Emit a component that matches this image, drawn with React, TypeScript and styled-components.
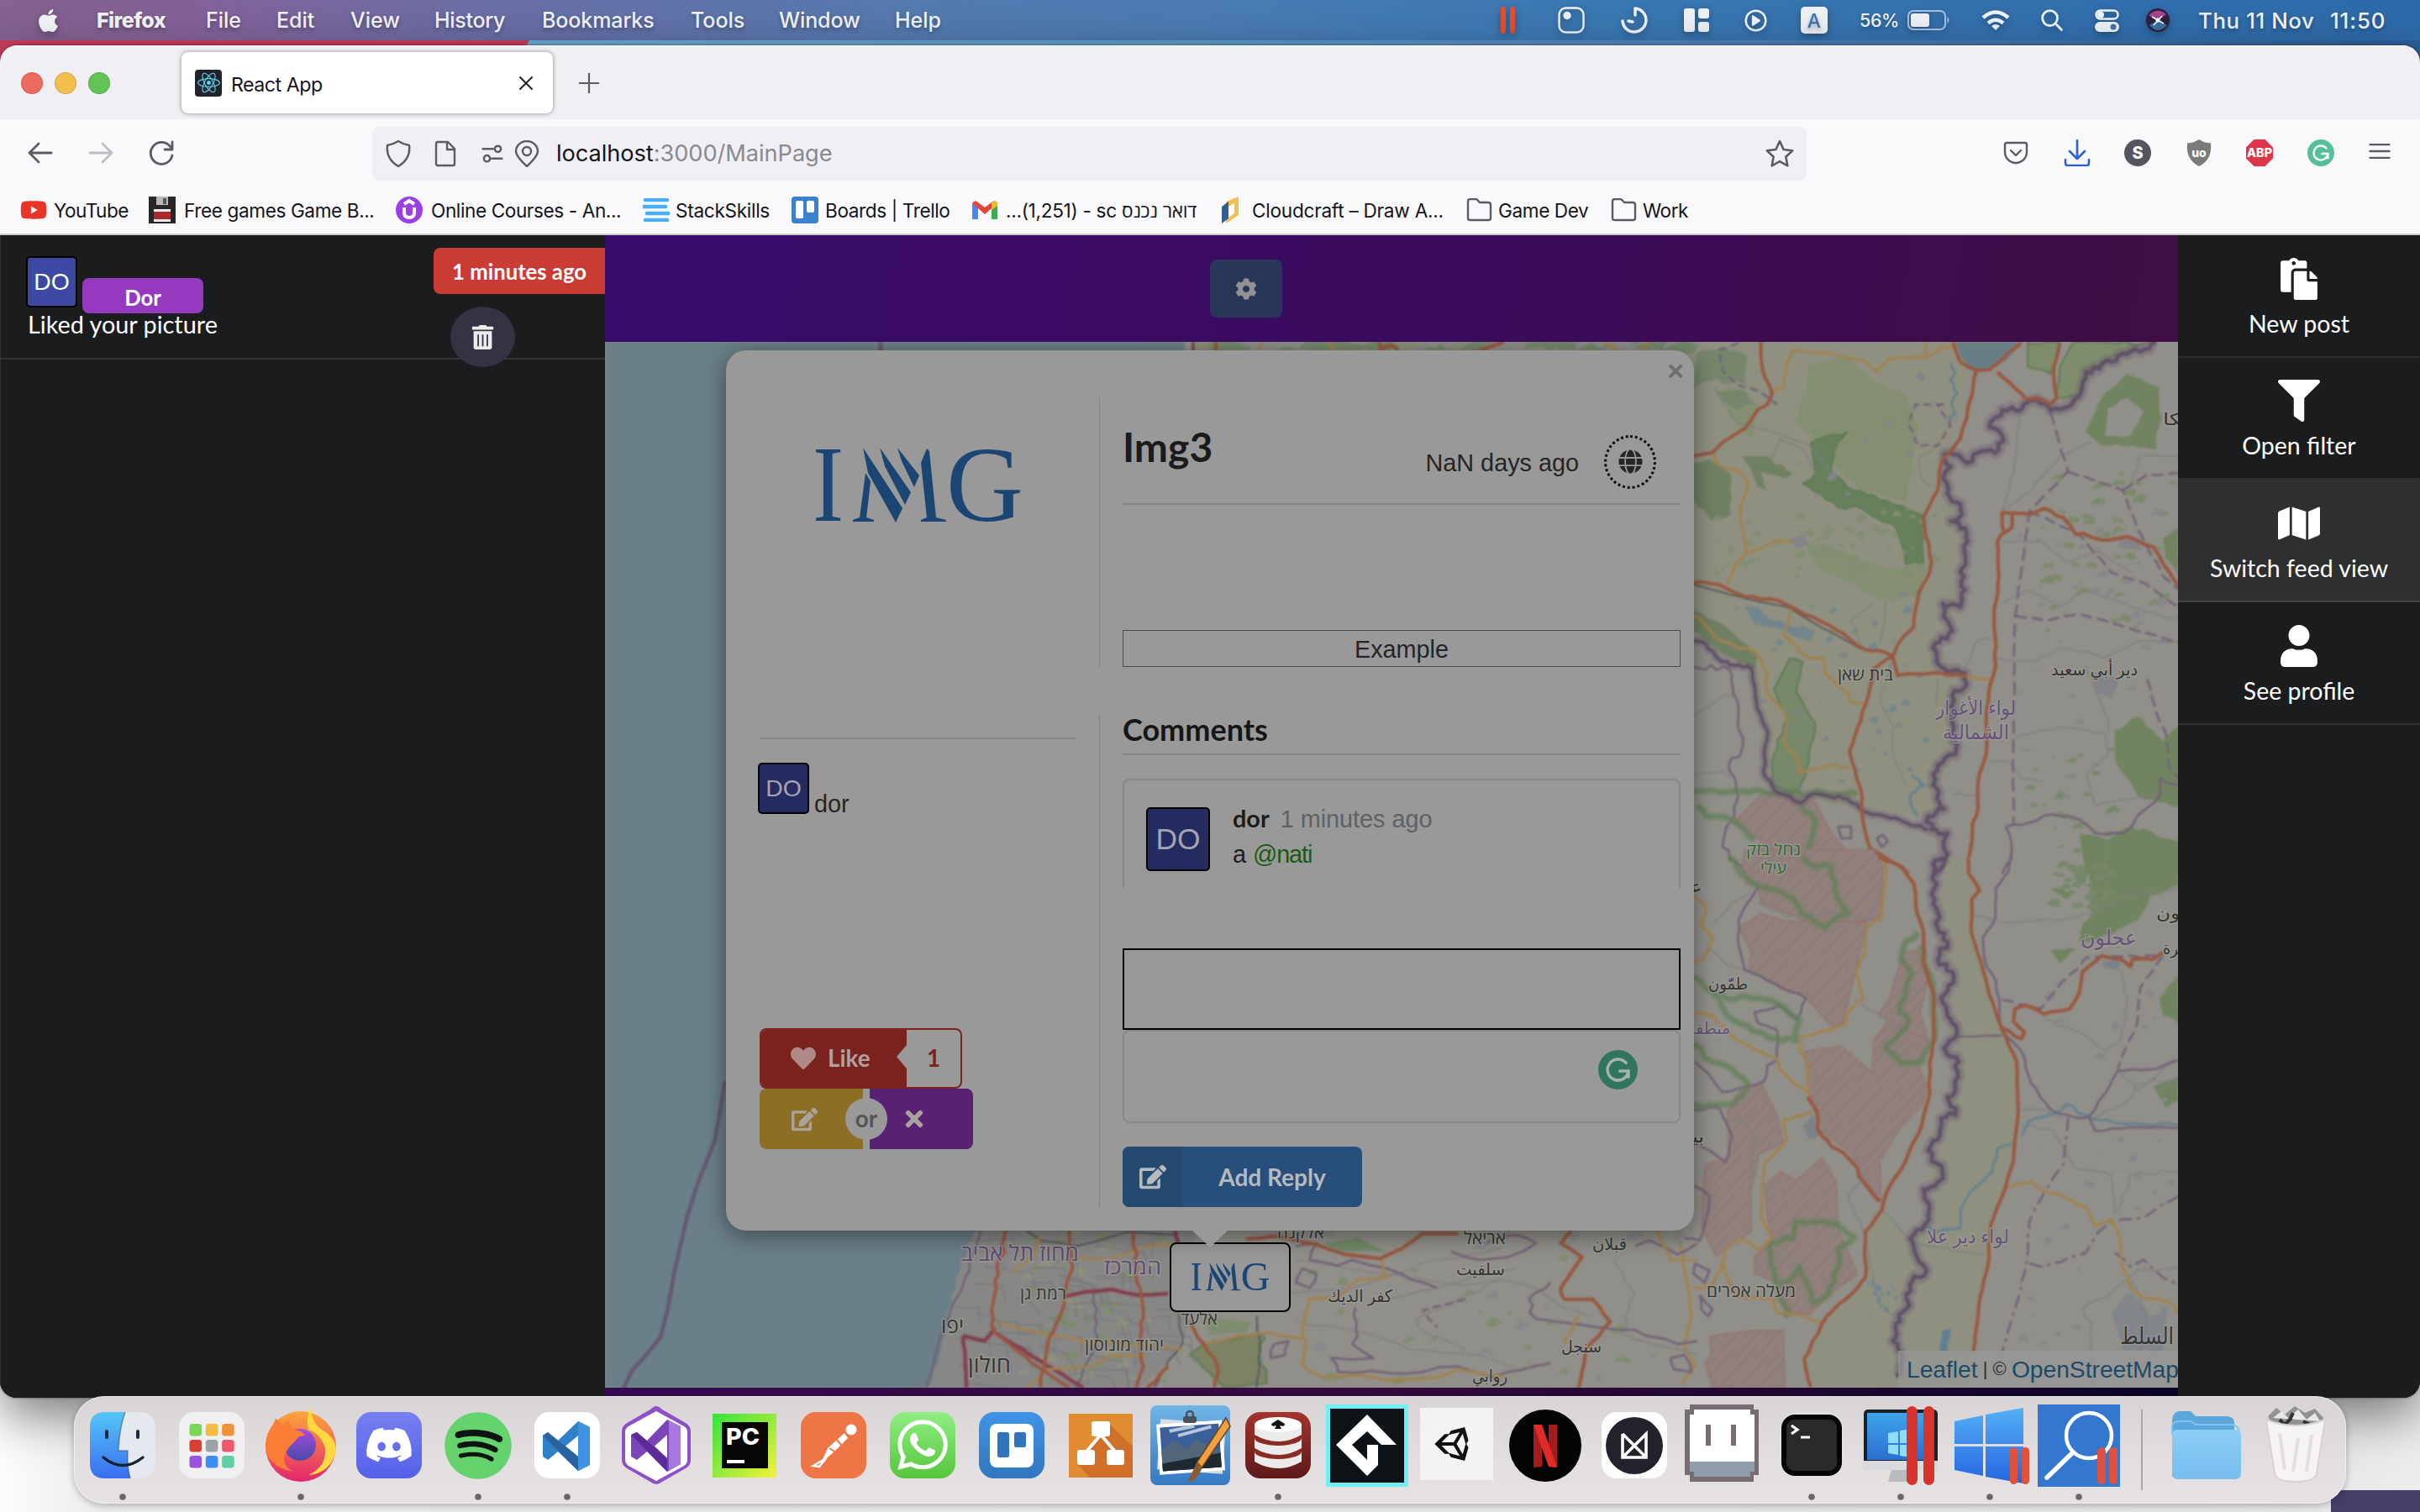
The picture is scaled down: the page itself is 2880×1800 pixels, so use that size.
import React from 'react';
import styled, { createGlobalStyle } from 'styled-components';
import {
  FaApple, FaReact, FaCog, FaPaste, FaFilter, FaMap, FaUser, FaTrashAlt, FaGlobe, FaHeart,
  FaEdit, FaTimes, FaDiscord, FaSpotify, FaWhatsapp, FaYoutube, FaUnity,
} from 'react-icons/fa';

const UI = `Inter, 'Open Sans', 'DejaVu Sans', sans-serif`;
const LATO = `Lato, 'Open Sans', sans-serif`;
const HELV = `'Liberation Sans', Arial, sans-serif`;

const Global = createGlobalStyle`
  * { box-sizing: border-box; }
  html, body { margin: 0; padding: 0; background: #ececec; }
  body { width: 2880px; height: 1800px; overflow: hidden; }
  svg { display: block; flex: none; }
`;

/* ---------- desktop ---------- */
const Desktop = styled.main`
  position: relative;
  width: 2880px;
  height: 1800px;
  overflow: hidden;
  font-family: ${UI};
  background: linear-gradient(90deg, #fdfdfd 0, #ececec 120px, #e4e4e4 2700px, #ededed 2880px);
`;
const Wallpaper = styled.div`
  height: 120px;
  background: linear-gradient(116deg, #cb3d5d 0 586px, #6caddb 588px, #5f9fcf 1300px, #3e78ad 2200px, #27609a 100%);
`;
const DesktopCorner = styled.div`
  position: absolute;
  right: 0;
  bottom: 0;
  width: 106px;
  height: 26px;
  background: #463d68;
`;

const MenuBar = styled.header`
  position: absolute;
  inset: 0 0 auto 0;
  height: 48px;
  display: flex;
  align-items: center;
  padding-left: 42px;
  color: #f3f4f8;
  font-size: 25px;
  background: linear-gradient(90deg, #85628f 0, #83629a 8%, #6a6ea5 20%, #547ab0 38%, #4a7cb3 50%, #3a78b3 66%, #2e6aab 100%);
  svg { filter: drop-shadow(0 3px 4px rgba(0, 0, 0, 0.3)); }
`;
const MenuItem = styled.span<{ $w: number; $bold?: boolean; $ls?: number; $size?: number }>`
  flex: none;
  width: ${(p) => p.$w}px;
  white-space: pre;
  font-size: ${(p) => p.$size ?? 25}px;
  font-weight: ${(p) => (p.$bold ? 800 : 500)};
  letter-spacing: ${(p) => p.$ls ?? 0}px;
  text-shadow: 0 3px 5px rgba(0, 0, 0, 0.3);
`;

/* ---------- browser window ---------- */
const Window = styled.section`
  position: absolute;
  left: 0;
  top: 54px;
  width: 2880px;
  height: 1610px;
  display: flex;
  flex-direction: column;
  overflow: hidden;
  border-radius: 20px;
  background: #1b1c1d;
`;
const WindowShadow = styled.div`
  position: absolute;
  left: 0;
  top: 54px;
  width: 2880px;
  height: 1610px;
  border-radius: 20px;
  box-shadow: 0 20px 60px rgba(0, 0, 0, 0.5), 0 0 3px rgba(0, 0, 0, 0.5);
`;
const TabStrip = styled.div`
  height: 88px;
  flex: none;
  display: flex;
  align-items: center;
  background: #f0f0f4;
  border-top: 1px solid #fff;
  padding: 0 0 0 25px;
`;
const Lights = styled.div`
  display: flex;
  gap: 14px;
  width: 191px;
`;
const Light = styled.i<{ $c: string }>`
  width: 26px;
  height: 26px;
  border-radius: 50%;
  background: ${(p) => p.$c};
  border: 1px solid rgba(0, 0, 0, 0.12);
`;
const Tab = styled.div`
  width: 442px;
  height: 73px;
  display: flex;
  align-items: center;
  padding: 0 24px 0 16px;
  border-radius: 8px;
  background: #fff;
  box-shadow: 0 0 5px rgba(60, 60, 70, 0.6);
  color: #15141a;
  font-size: 23.2px;
  margin-right: 31px;
`;
const Favicon = styled.span`
  width: 32px;
  height: 32px;
  display: grid;
  place-items: center;
  border-radius: 4px;
  background: #20232a;
  color: #5fd3f3;
  margin-right: 11px;
`;
const TabTitle = styled.span`
  flex: 1;
  padding-top: 4px;
  letter-spacing: -0.5px;
`;
const Toolbar = styled.div`
  height: 80px;
  flex: none;
  display: flex;
  align-items: center;
  padding: 0 34px 0 32px;
  background: #f9f9fb;
`;
const NavIcons = styled.div`
  display: flex;
  gap: 40px;
  width: 411px;
`;
const UrlBar = styled.div`
  width: 1707px;
  height: 64px;
  margin-top: 1px;
  display: flex;
  align-items: center;
  padding: 0 15px 0 15px;
  border-radius: 8px;
  background: #f0f0f4;
`;
const UrlIcons = styled.span`
  width: 204px;
  display: flex;
  align-items: center;
`;
const UrlIcon = styled.span<{ $w: number }>`
  width: ${(p) => p.$w}px;
`;
const UrlText = styled.span`
  flex: 1;
  color: #8a898f;
  font-size: 27.2px;
  letter-spacing: -0.05px;
  b { font-weight: 400; color: #15141a; }
`;
const Extensions = styled.div`
  flex: 1;
  display: flex;
  justify-content: space-between;
  padding-left: 233px;
`;
const Bookmarks = styled.nav`
  height: 58px;
  flex: none;
  display: flex;
  align-items: center;
  padding-left: 24px;
  background: #f9f9fb;
  border-bottom: 2px solid #ccccce;
  color: #15141a;
  font-size: 22.6px;
`;
const Bookmark = styled.span<{ $w: number; $gap: number; $ls: number }>`
  flex: none;
  width: ${(p) => p.$w}px;
  display: flex;
  align-items: center;
  gap: ${(p) => p.$gap}px;
  white-space: nowrap;
  letter-spacing: ${(p) => p.$ls}px;
`;

/* ---------- application ---------- */
const Page = styled.div`
  flex: 1;
  display: flex;
  min-height: 0;
`;
const Feed = styled.aside`
  width: 720px;
  background: #1b1c1d;
  border-left: 1px solid #303132;
`;
const Notice = styled.article`
  height: 148px;
  display: flex;
  justify-content: space-between;
  padding: 15px 0 0 30px;
  border-bottom: 2px solid #323334;
  color: #fff;
  font: 400 28px/30px ${LATO};
`;
const NoticeWho = styled.div`
  display: flex;
  align-items: flex-end;
  gap: 6px;
  height: 78px;
  > :first-child { margin-bottom: 7px; }
`;
const NoticeText = styled.p`
  margin: -2px 0 0 2px;
  font-size: 28.8px;
  white-space: nowrap;
`;
const Avatar = styled.span<{ $s: number; $dim?: boolean }>`
  width: ${(p) => p.$s}px;
  height: ${(p) => p.$s}px;
  flex: none;
  display: grid;
  place-items: center;
  border: 2px solid #000;
  border-radius: 5px;
  background: ${(p) => (p.$dim ? '#242b61' : '#3d48a2')};
  color: ${(p) => (p.$dim ? '#a3a4b4' : '#fff')};
  font: 400 ${(p) => p.$s * 0.465}px/1 ${HELV};
`;
const NameTag = styled.span`
  width: 144px;
  height: 42px;
  border-radius: 8px;
  background: #953abf;
  display: grid;
  place-items: center;
  padding-top: 4px;
  font-weight: 700;
  font-size: 25.7px;
`;
const NoticeSide = styled.div`
  width: 204px;
  display: flex;
  flex-direction: column;
  gap: 15px;
`;
const TimeTag = styled.span`
  flex: none;
  height: 55px;
  border-radius: 8px 0 0 8px;
  background: #c93b33;
  display: grid;
  place-items: center;
  font-weight: 700;
  font-size: 25.7px;
`;
const RoundButton = styled.button`
  flex: none;
  width: 77px;
  height: 72px;
  margin-left: 20px;
  border: 0;
  border-radius: 50%;
  background: #353343;
  color: #ececec;
  display: grid;
  place-items: center;
`;
const Center = styled.div`
  width: 1872px;
  flex: none;
  display: flex;
  flex-direction: column;
`;
const TopBar = styled.div`
  height: 127px;
  flex: none;
  display: flex;
  align-items: center;
  padding-left: 720px;
  background: linear-gradient(100deg, #380b6d, #3a0b5c 55%, #3f0e44);
`;
const SettingsButton = styled.button`
  width: 86px;
  height: 69px;
  border: 0;
  border-radius: 8px;
  display: grid;
  place-items: center;
  background: #283759;
  color: #929294;
`;
const MapArea = styled.div`
  position: relative;
  flex: none;
  height: 1245px;
  overflow: hidden;
  background: #918f8a;
`;
const BottomBar = styled.div`
  flex: 1;
  background: linear-gradient(90deg, #340b52, #360b3e 45%, #0c0528);
`;
const Attribution = styled.div`
  position: absolute;
  right: 0;
  bottom: 0;
  width: 333px;
  height: 44px;
  padding-left: 10px;
  display: flex;
  align-items: center;
  white-space: pre;
  overflow: hidden;
  background: rgba(153, 153, 153, 0.72);
  color: #2c2c2c;
  font: 400 22px/46px ${HELV};
  a { color: #1c4a66; font-size: 28.2px; }
`;

/* popup */
const Popup = styled.section`
  position: absolute;
  left: 144px;
  top: 10px;
  width: 1152px;
  height: 1048px;
  padding: 56px 16px 28px 40px;
  display: grid;
  grid-template-columns: 376px 1px 664px;
  grid-template-rows: 321px 587px;
  column-gap: 27.5px;
  row-gap: 56px;
  border-radius: 24px;
  background: #999;
  box-shadow: 0 6px 28px rgba(0, 0, 0, 0.42);
  color: #252526;
  font: 400 28.8px/1.2 ${HELV};
`;
const PopupTip = styled.i`
  position: absolute;
  left: 554px;
  top: 1047px;
  border: 22px solid transparent;
  border-top: 21px solid #999;
  border-bottom: 0;
`;
const CloseX = styled.span`
  position: absolute;
  right: 12px;
  top: 8px;
  font: 700 34px/32px ${HELV};
  color: #6e6e6e;
`;
const VLine = styled.i`
  background: #838383;
`;
const LogoCell = styled.div`
  padding: 60px 0 0 67px;
`;
const Details = styled.div`
  display: flex;
  flex-direction: column;
  justify-content: space-between;
`;
const TitleRow = styled.div`
  height: 128px;
  display: flex;
  align-items: center;
  border-bottom: 2px solid #858585;
  padding-right: 29px;
`;
const Title = styled.h1`
  flex: 1;
  margin: 0;
  padding: 0 0 9px 0;
  font: 700 48px/1 ${LATO};
  color: #1b1b1b;
`;
const Ago = styled.span`
  margin: 31px 30px 0 0;
`;
const DottedRing = styled.span`
  width: 62px;
  height: 64px;
  margin-top: 27px;
  display: grid;
  place-items: center;
  border: 3px dotted #080808;
  border-radius: 50%;
  color: #262626;
`;
const Caption = styled.div`
  height: 44px;
  display: grid;
  place-items: center;
  padding-top: 3px;
  border: 1.5px solid #4c4c4c;
`;
const AuthorCol = styled.div`
  display: flex;
  flex-direction: column;
  padding-top: 28px;
`;
const Rule = styled.i`
  height: 2px;
  flex: none;
  background: #858585;
`;
const Author = styled.div`
  display: flex;
  align-items: flex-end;
  gap: 6px;
  margin: 28px 0 255px -2px;
  line-height: 24px;
`;
const LikeButton = styled.div`
  display: flex;
  width: 241px;
  height: 72px;
  flex: none;
  border: 2px solid #7a221e;
  border-radius: 8px;
  background: #999;
  font: 700 27.8px/1 ${LATO};
`;
const LikeMain = styled.div`
  position: relative;
  width: 173px;
  display: flex;
  align-items: center;
  gap: 14px;
  padding-left: 35px;
  border-radius: 6px 0 0 6px;
  background: #7a221e;
  color: #b3a0a0;
  svg { color: #b08a88; }
  &::after {
    content: '';
    position: absolute;
    right: 0;
    top: 18px;
    border: 14px solid transparent;
    border-left: 0;
    border-right: 12px solid #999;
  }
`;
const LikeCount = styled.div`
  flex: 1;
  display: grid;
  place-items: center;
  color: #7a221e;
`;
const OrGroup = styled.div`
  position: relative;
  display: flex;
  width: 254px;
  height: 72px;
  justify-content: space-between;
`;
const OrHalf = styled.div<{ $c: string; $right?: boolean }>`
  width: 123px;
  display: grid;
  place-items: center;
  padding-right: 17px;
  border-radius: ${(p) => (p.$right ? '0 8px 8px 0' : '8px 0 0 8px')};
  background: ${(p) => p.$c};
  color: #aaa39d;
`;
const OrBadge = styled.span`
  position: absolute;
  left: 102px;
  top: 11px;
  width: 50px;
  height: 50px;
  border-radius: 50%;
  display: grid;
  place-items: center;
  background: #999;
  color: #555;
  font: 700 27.8px/1 ${LATO};
`;
const CommentCol = styled.div`
  display: flex;
  flex-direction: column;
`;
const SectionTitle = styled.h3`
  height: 49px;
  margin: 0 0 28px;
  border-bottom: 2px solid #858585;
  color: #161616;
  font: 700 36px/37px ${LATO};
`;
const CommentBox = styled.div`
  height: 130px;
  display: flex;
  gap: 27px;
  padding: 32px 0 0 26px;
  border: 2px solid #888;
  border-bottom: 0;
  border-radius: 8px 8px 0 0;
`;
const CommentText = styled.div`
  color: #1c1c1c;
  line-height: 42px;
  margin-top: -8px;
  b { font: 700 28.8px/42px ${LATO}; margin-right: 13px; }
  time { color: #616161; }
  em { font-style: normal; color: #1c5a12; letter-spacing: -1.1px; }
`;
const ReplyInput = styled.div`
  height: 97px;
  margin-top: 72px;
  border: 2px solid #000;
`;
const ReplyArea = styled.div`
  height: 111px;
  display: flex;
  justify-content: flex-end;
  padding: 22px 49px 0 0;
  border: 2px solid #888;
  border-radius: 8px;
`;
const AddReply = styled.button`
  width: 285px;
  height: 72px;
  margin-top: 28px;
  padding: 0;
  display: flex;
  overflow: hidden;
  border: 0;
  border-radius: 8px;
  background: #284e7b;
  color: #b5babf;
  font: 700 28px/72px ${LATO};
  text-align: center;
`;
const AddIcon = styled.span`
  width: 71px;
  height: 72px;
  display: grid;
  place-items: center;
  background: #254a70;
`;
const AddLabel = styled.span`
  flex: 1;
`;
const Marker = styled.div`
  position: absolute;
  left: 672px;
  top: 1072px;
  width: 144px;
  height: 83px;
  display: grid;
  place-items: center;
  border: 2px solid #000;
  border-radius: 8px;
  background: #989898;
`;

/* right menu */
const Side = styled.aside`
  width: 288px;
  background: #1b1c1d;
`;
const SideItem = styled.div<{ $on?: boolean }>`
  height: 145.7px;
  display: flex;
  flex-direction: column;
  align-items: center;
  justify-content: flex-end;
  padding-bottom: 22px;
  gap: 11px;
  border-bottom: 2px solid ${(p) => (p.$on ? '#434445' : '#2e2f30')};
  background: ${(p) => (p.$on ? '#2e2f30' : '#1b1c1d')};
  color: #fff;
  font: 400 28.5px/34px ${LATO};
`;

/* dock */
const Dock = styled.footer`
  position: absolute;
  left: 88px;
  top: 1662px;
  width: 2704px;
  height: 128px;
  display: flex;
  padding-left: 5px;
  border-radius: 36px;
  background: linear-gradient(180deg, #d8d4d6, #e3dee0 60%, #e6e2e4);
  box-shadow: inset 0 0 0 1px rgba(255, 255, 255, 0.45), 0 2px 8px rgba(0, 0, 0, 0.28);
`;
const DockSlot = styled.div`
  width: 105.8px;
  height: 128px;
  flex: none;
  svg { overflow: visible; }
`;
const DockLine = styled.i`
  width: 2px;
  height: 96px;
  margin: 16px 23px 0 22px;
  background: #aaa6a8;
`;

/* ---------- map ---------- */
type Pt = [number, number];
const pts = (s: string): Pt[] => s.trim().split(/\s+/).map((p) => p.split(',').map(Number) as Pt);
const line = (s: string) => 'M' + s.trim().split(/\s+/).join('L');
const wiggle = (s: string, amp: number, step: number, seed = 1) => {
  const p = pts(s);
  let out = `M${p[0][0]},${p[0][1]}`;
  let k = seed * 17;
  for (let i = 1; i < p.length; i++) {
    const [ax, ay] = p[i - 1];
    const [bx, by] = p[i];
    const len = Math.hypot(bx - ax, by - ay) || 1;
    const n = Math.max(1, Math.round(len / step));
    for (let j = 1; j <= n; j++) {
      k = (k * 73 + 41) % 997;
      const side = j === n ? 0 : (k / 997 - 0.5) * 2 * amp;
      const t = j / n;
      out += `L${(ax + (bx - ax) * t - ((by - ay) / len) * side).toFixed(1)},${(ay + (by - ay) * t + ((bx - ax) / len) * side).toFixed(1)}`;
    }
  }
  return out;
};

const ROAD: Record<string, [string, number]> = {
  red: ['#98583f', 4.2],
  orange: ['#a0824e', 3.2],
  gray: ['#7f7f82', 1.5],
  purple: ['#716177', 2.6],
  maroon: ['#844050', 5],
  blue: ['#64818f', 3],
  black: ['#55555a', 2],
};
const Road = ({ k, d, a = 3, s = 26, dash }: { k: string; d: string; a?: number; s?: number; dash?: string }) => (
  <path d={wiggle(d, a, s, d.length)} fill="none" stroke={ROAD[k][0]} strokeWidth={ROAD[k][1]} strokeLinejoin="round" vectorEffect="non-scaling-stroke" strokeDasharray={dash} />
);
const Area = ({ c, d, a = 6, s = 22, st }: { c: string; d: string; a?: number; s?: number; st?: string }) => (
  <path d={wiggle(d, a, s, d.length) + 'Z'} fill={c} stroke={st} strokeWidth={st ? 2 : 0} vectorEffect="non-scaling-stroke" />
);
const Border = ({ d, a = 10, s = 14, w = 5 }: { d: string; a?: number; s?: number; w?: number }) => {
  const path = wiggle(d, a, s, d.length);
  return (
    <g fill="none" strokeLinejoin="round">
      <path d={path} stroke="#6c5c74" strokeWidth={w * 2.2} opacity={0.35} vectorEffect="non-scaling-stroke" />
      <path d={path} stroke="#5c4c64" strokeWidth={w * 0.8} opacity={0.85} vectorEffect="non-scaling-stroke" />
    </g>
  );
};
const Reserve = ({ d }: { d: string }) => {
  const path = wiggle(d, 7, 24, d.length);
  return (
    <g fill="none" strokeLinejoin="round">
      <path d={path} stroke="#65825a" strokeWidth="9" opacity={0.5} vectorEffect="non-scaling-stroke" />
      <path d={path} stroke="#587a50" strokeWidth="2.5" opacity={0.55} vectorEffect="non-scaling-stroke" />
    </g>
  );
};
const Military = ({ d }: { d: string }) => <path d={d} fill="url(#hatch)" stroke="#94706c" strokeWidth="3" />;
const Label = ({ x, y, w, c = '#363634', size = 20, children }: { x: number; y: number; w: number; c?: string; size?: number; children: string }) => (
  <text x={x + w / 2 - 720} y={y - 407} textLength={w} lengthAdjust="spacingAndGlyphs" textAnchor="middle" fontSize={size} fontWeight="500" fill={c} stroke="#a09f9a" strokeWidth="3" strokeOpacity="0.65" paintOrder="stroke" fontFamily="'Open Sans', 'DejaVu Sans', sans-serif">{children}</text>
);

const scatter = (n: number, seed: number, x0: number, y0: number, w: number, h: number) => {
  let k = seed;
  const rnd = () => ((k = (k * 1103515245 + 12345) % 2147483648), k / 2147483648);
  return Array.from({ length: n }, () => ({ x: x0 + rnd() * w, y: y0 + rnd() * h, r: 3 + rnd() * 9, q: rnd() }));
};
const blob = (b: { x: number; y: number; r: number; q: number }, sx: number) =>
  wiggle(`${b.x},${b.y - b.r} ${b.x + b.r * sx},${b.y - b.r * 0.3} ${b.x + b.r * sx * 0.7},${b.y + b.r} ${b.x - b.r * sx},${b.y + b.r * 0.6}`, b.r * 0.5, 8, Math.floor(b.q * 40) + 1) + 'Z';

const MapPicture = () => (
  <svg width="1872" height="1245" viewBox="0 0 1872 1245">
    <defs>
      <pattern id="hatch" width="22" height="22" patternUnits="userSpaceOnUse" patternTransform="rotate(45)">
        <rect width="22" height="22" fill="#8f817d" />
        <rect width="3.500" height="22" fill="#93736f" />
      </pattern>
      <filter id="soft"><feGaussianBlur stdDeviation="0.8" /></filter>
    </defs>
    <rect width="1872" height="1245" fill="#918f89" />
    <g filter="url(#soft)">
      {/* eastern tile, north half */}
      <g transform="translate(1280 -7) scale(0.3827 0.4082)">
        <Area c="#8f907f" d="-40,0 860,0 900,100 830,340 880,560 870,800 790,910 890,990 850,1200 780,1400 560,1380 370,1350 280,1320 240,1120 200,960 40,890 -40,880" a={4} />
        <Area c="#848f72" d="400,80 520,60 600,130 700,170 740,260 720,400 700,480 560,450 480,380 420,300 360,250 390,160" />
        <Area c="#848f72" d="380,600 480,620 640,680 760,660 750,760 620,770 540,720 430,680" />
        <Area c="#848f72" d="140,130 240,200 220,300 150,230" />
        <Area c="#77866a" d="50,50 130,30 210,60 200,140 90,130 40,150" />
        <Area c="#77866a" d="110,160 190,155 230,200 180,215 130,190" />
        <Area c="#6f8062" d="40,370 90,360 155,400 155,520 100,540 40,480" />
        <Area c="#6f8062" d="190,350 260,350 350,400 330,415 250,395 270,450 240,440 220,390" />
        <Area c="#6f8062" d="40,800 130,840 240,930 230,970 120,920 40,860" a={3} />
        <Area c="#66805c" d="405,310 520,280 480,330 470,400 540,450 640,480 750,520 755,660 700,665 670,560 560,500 490,500 380,430 420,400" st="#5b7a50" />
        <Area c="#78886a" d="340,940 380,950 360,1040 420,1130 400,1240 370,1330 280,1310 290,1220 330,1120 290,1030" st="#5b7a50" />
        <Area c="#7f8d6d" d="1080,20 1180,20 1150,110 1080,90" st="#5b7a50" />
        <Area c="#7f8d6d" d="1220,20 1450,20 1330,70 1260,100 1240,170 1170,180 1180,90" st="#5b7a50" />
        <Area c="#71835f" d="1260,280 1310,180 1390,110 1490,150 1490,260 1480,330 1400,320 1310,320" />
        <Area c="#918f89" d="1330,210 1390,180 1440,220 1400,290 1320,290" />
        <Area c="#71835f" d="1350,1150 1420,1110 1500,1180 1568,1120 1568,1380 1420,1340 1350,1230" />
        <Area c="#71835f" d="1240,1450 1330,1470 1400,1430 1568,1480 1568,1568 1260,1568" />
        <Area c="#71835f" d="1500,590 1548,560 1548,700 1510,650" />
        {scatter(46, 7, 1110, 400, 420, 460).map((b, i) => <path key={i} d={blob(b, 2.2)} fill="#7c8a6b" />)}
        {scatter(60, 11, 100, 500, 700, 200).map((b, i) => <path key={i} d={blob(b, 1.5)} fill="#818d70" />)}
        {scatter(26, 29, 1060, 1180, 300, 360).map((b, i) => <path key={i} d={blob(b, 2.4)} fill="#77876a" />)}
        {scatter(36, 3, 1050, 500, 480, 900).map((b, i) => <path key={i} d={blob(b, 1.8)} fill="#86868a" />)}
        {scatter(30, 5, 60, 100, 720, 1200).map((b, i) => <path key={i} d={blob(b, 1.6)} fill="#838388" />)}
        {scatter(26, 19, 200, 780, 600, 560).map((b, i) => <path key={i} d={blob(b, 1.4)} fill="#71868d" />)}
        <Area c="#838388" d="340,590 380,580 400,605 360,620" /><Area c="#838388" d="1280,980 1360,1000 1340,1060 1290,1040" />
        <Area c="#838388" d="1360,590 1430,590 1430,625 1380,620" /><Area c="#71868d" d="200,790 240,790 290,830 420,860 400,890 290,850 230,840" />
        <path d="M858,17Q870,90 930,98Q1020,90 1055,17Z" fill="#687e86" />
        <Military d="M165,1420L260,1330L410,1345L470,1450L530,1520L620,1568L630,1600L200,1600L250,1470Z" />
        <Road k="gray" d="105,150 160,240 210,260 320,290 400,320 470,400" /><Road k="gray" d="800,320 740,360 750,420 790,440" />
        <Road k="gray" d="1055,220 1035,400 1000,510 1090,450 1180,350 1280,310" /><Road k="gray" d="1000,780 1080,740 1180,790 1260,740 1400,790 1548,830" />
        <Road k="gray" d="1000,600 1120,600 1200,660 1300,630 1400,690" /><Road k="gray" d="985,940 1100,950 1180,910 1260,920 1320,940 1420,890 1548,890" />
        <Road k="gray" d="880,980 920,890 970,880" /><Road k="gray" d="660,940 620,1060 660,1140 660,1220 700,1310" /><Road k="gray" d="800,1000 795,1080" />
        <Road k="gray" d="1040,1170 1180,1140 1320,1160 1330,1220 1260,1280 1290,1370 1400,1350 1480,1330" /><Road k="gray" d="1260,960 1330,1120 1330,1160" />
        <Road k="gray" d="845,1335 920,1340" /><Road k="gray" d="960,1240 1020,1240 1060,1290 1130,1300" /><Road k="gray" d="40,1110 130,1050 180,1040" /><Road k="gray" d="40,1280 130,1270 160,1290" />
        <Road k="gray" d="560,900 530,830 600,780" /><Road k="gray" d="280,360 310,300 380,330 420,400" /><Road k="gray" d="640,770 620,900" /><Road k="gray" d="1548,350 1430,350 1400,440 1375,450" />
        <Road k="black" d="40,725 200,765 330,790 420,840 560,912" a={1} />
        <Road k="blue" d="840,80 850,180 840,250" a={14} s={12} /><Road k="blue" d="720,1280 760,1310 715,1340 740,1400" a={9} s={12} />
        <Road k="purple" d="40,965 150,970 180,1100 190,1210 150,1250 180,1340 130,1490 200,1568" a={8} s={20} />
        <Road k="purple" d="1150,220 1205,395 1085,510 1040,815 1035,1200 1035,1430" dash="16 7" a={2} /><Road k="purple" d="1205,395 1375,450 1420,560 1500,700 1548,740" dash="14 6" />
        <Road k="purple" d="1375,450 1450,405 1548,400" dash="14 6" /><Road k="purple" d="1085,510 1240,580 1340,690 1440,720 1548,790" dash="14 6" /><Road k="purple" d="1040,815 1140,830 1240,810 1420,860 1548,895" dash="14 6" />
        <Road k="purple" d="820,200 730,200 710,260 740,320 800,320 840,260 800,200" dash="10 5" /><Road k="purple" d="180,20 120,40 130,100 170,140 240,160 300,200" dash="10 5" />
        <Road k="purple" d="1450,1000 1480,1100 1510,1160 1520,1260 1548,1290" dash="14 6" /><Road k="purple" d="1015,1430 1080,1420 1160,1395 1240,1410 1290,1450 1380,1450 1420,1400 1490,1340 1490,1290 1548,1310" a={6} />
        <Road k="purple" d="1010,1430 1030,1500 1000,1568" a={8} /><Road k="purple" d="490,1430 530,1430 530,1465 500,1465 490,1430" a={2} /><Road k="purple" d="610,1465 630,1455 645,1475 625,1490 610,1465" a={2} />
        <Reserve d="40,1330 100,1325 260,1330 550,1335" /><Reserve d="50,1370 80,1400 160,1410 230,1470" /><Reserve d="370,1360 420,1420 400,1490 390,1540 470,1568" />
        <Border d="40,890 80,900 130,950 220,970 240,1090 270,1150 260,1280 300,1330 370,1360 420,1335 520,1350 570,1385 680,1410 770,1440" a={5} />
        <Border d="1480,20 1400,45 1340,75 1260,105 1245,165 1210,205 1150,215 1110,185 1060,215 1000,215 960,265 1000,290 990,330 940,335 890,370 850,345 820,345 840,380 820,400 830,460 870,490 875,520 840,540 885,560 885,640 870,690 885,740 870,790 815,780 830,830 845,860 785,910 820,970 885,985 890,1015 845,1050 850,1140 855,1220 800,1250 785,1310 820,1380 770,1400 780,1440 830,1450 820,1540 790,1568" w={6.500} />
        <Road k="orange" d="285,160 320,150 330,80 350,40 480,55 570,70 610,105 650,65 765,62 765,20" /><Road k="orange" d="765,62 810,35 850,30" /><Road k="orange" d="105,345 115,375 190,400 210,430 185,510 205,635 300,595 345,602" />
        <Road k="orange" d="205,635 175,660 145,725" /><Road k="orange" d="345,790 320,870 400,940 445,940 450,985 520,1040 530,1070 580,1075" /><Road k="orange" d="40,815 130,890 230,920 270,980 270,1040 310,1080 330,1130 320,1180 370,1250 370,1275 480,1250 525,1255" a={6} />
        <Road k="orange" d="880,990 965,1002" /><Road k="orange" d="630,1520 640,1568" />
        <Road k="red" d="250,17 255,100 285,170 270,200 240,215 200,270 130,310 100,340 40,350" /><Road k="red" d="848,17 870,75 920,100 960,98 1060,20" />
        <Road k="red" d="920,100 890,240 870,300 810,370 800,450 755,530 780,660 770,700 740,750 725,850 690,880 660,935 600,970 575,1075 535,1190 525,1210 560,1320 570,1430 590,1495 650,1530 710,1568" />
        <Road k="red" d="985,105 1075,185 1110,180 1150,200 1170,180 1160,90 1180,20" /><Road k="red" d="40,718 120,725 200,760 300,770 345,790 480,855 575,915 620,918 660,935 675,990 790,982 890,992" />
        <Road k="red" d="1548,730 1470,615 1390,585 1310,595 1250,575 1230,580 1190,530 1130,503 1090,520 1000,515 1005,575 1030,560 1030,515" />
        <Road k="red" d="1000,575 985,600 990,700 975,820 980,960 965,1010 950,1120 950,1220 925,1300 925,1380 908,1420 895,1568" />
      </g>
      {/* eastern tile, south half */}
      <g transform="translate(1280 613) scale(0.3827 0.4209)">
        <Area c="#8f907f" d="830,0 910,0 905,200 940,320 1010,500 1045,600 1050,730 1000,950 960,1150 905,1420 900,1500 680,1500 660,1330 760,1160 720,1080 780,980 760,800 850,720 860,560 820,440 840,340 790,200" a={4} />
        <Area c="#8f907f" d="640,1000 700,1090 760,1160 660,1330 690,1500 400,1500 380,1420 450,1300 575,1200 570,1070" a={3} />
        <Area c="#71835f" d="1280,0 1548,0 1548,80 1460,110 1420,180 1340,220 1240,240 1250,190 1280,160 1270,60" /><Area c="#71835f" d="1150,90 1240,100 1200,120" /><Area c="#71835f" d="1150,265 1230,260 1180,300" />
        <Area c="#71835f" d="1490,400 1548,330 1548,470 1500,450" /><Area c="#71835f" d="1470,650 1548,620 1548,690 1510,710" />
        {scatter(40, 31, 1150, 20, 200, 120).map((b, i) => <path key={i} d={blob(b, 2)} fill="#77876a" />)}
        {scatter(34, 37, 1060, 350, 480, 1100).map((b, i) => <path key={i} d={blob(b, 1.6)} fill="#86868a" />)}
        {scatter(14, 41, 580, 1200, 100, 90).map((b, i) => <path key={i} d={blob(b, 0.6)} fill="#6a8494" />)}
        <Area c="#82858a" d="1340,1290 1400,1230 1460,1300 1520,1270 1500,1400 1380,1400" /><Area c="#7d8288" d="380,760 410,730 430,790 400,800" /><Area c="#7d8288" d="1310,295 1370,290 1360,320 1320,315" />
        <Military d="M240,85L190,30L200,-20L390,-20L600,-20L630,30L620,180L400,185L250,130Z" />
        <Military d="M180,200L250,160L320,180L580,185L520,420L500,480L470,480L390,400L210,320L220,270Z" />
        <Military d="M385,550L500,535L595,610L600,520L640,470L700,490L770,520L740,590L765,650L755,700L680,770L620,860L625,975L560,900L530,840L430,770L400,660Z" />
        <Military d="M615,445L650,400L690,270L740,265L775,330L745,440L770,520L700,490Z" />
        <Military d="M145,720L180,665L255,645L300,730L320,810L245,840L220,940L220,1060L110,1130L65,1050L75,870L150,850Z" />
        <Military d="M260,930L310,890L360,915L440,850L485,920L490,1050L550,1180L460,1240L400,1295L330,1290L290,1200L230,1180L230,1130L280,1090Z" />
        <Military d="M90,1355L230,1340L320,1340L325,1500L100,1500L75,1430L95,1410Z" />
        <Road k="gray" d="100,190 160,130 230,100" /><Road k="gray" d="240,130 330,170 480,160 600,180" /><Road k="gray" d="80,250 150,310 200,320" /><Road k="gray" d="540,400 620,450 670,490" /><Road k="gray" d="630,1000 720,1090 800,1105 945,1125" />
        <Road k="gray" d="910,165 1000,185 1170,180 1280,160" a={6} /><Road k="gray" d="1060,715 1130,715 1190,740" /><Road k="gray" d="1130,460 1250,500 1320,550 1370,520 1390,400 1370,320" a={5} /><Road k="gray" d="1280,160 1400,110 1548,90" />
        <Road k="gray" d="1060,760 1150,770 1230,880 1340,900 1350,1010" a={6} /><Road k="gray" d="1350,1010 1390,940 1400,900 1548,890" a={7} /><Road k="gray" d="1280,1500 1280,1320 1250,1280 1310,1250 1420,1170 1548,1160" a={6} /><Road k="gray" d="1400,1200 1450,1300 1430,1400" a={8} />
        <Road k="gray" d="560,920 520,960 570,1060 600,1200 620,1270 690,1320" /><Road k="gray" d="120,740 200,750 230,800 220,880 250,910" /><Road k="gray" d="1360,600 1420,660 1480,620 1540,560" a={9} /><Road k="gray" d="1280,740 1390,690 1420,640 1548,630" a={8} />
        <Road k="blue" d="1030,812 985,825 970,890 900,950 870,1000 870,1050 800,1060 760,1040" /><Road k="blue" d="1060,790 1080,750 1130,735 1180,720 1200,700 1260,730 1300,745 1420,755 1548,760" a={6} /><Area c="#5f7f92" d="815,1340 840,1335 830,1400 805,1400" />
        <Road k="purple" d="240,85 180,180 180,250 200,320 390,400 360,460" a={4} /><Road k="purple" d="360,460 310,420 230,440 240,470 300,490 300,575 270,590 260,635 210,650 125,665" a={4} /><Road k="purple" d="45,580 100,630 130,665" a={4} />
        <Road k="purple" d="40,715 120,710 160,790 140,865 90,830 50,810" a={5} /><Road k="purple" d="40,930 90,960 75,1040 60,1085 10,1080" a={5} /><Road k="purple" d="45,1150 90,1170 75,1205 40,1180 45,1150" a={3} /><Road k="purple" d="60,1240 100,1280 85,1300 65,1280 60,1240" a={3} />
        <Road k="purple" d="1030,0 1020,40 980,90 980,170 940,230 950,310 980,350 1000,490 1060,550 1090,640 1150,715 1230,738 1270,735 1290,775 1420,765 1548,768" a={4} /><Road k="purple" d="865,508 1000,506" a={1} /><Road k="purple" d="1270,735 1320,670 1360,605 1480,600 1548,575" a={4} />
        <Road k="purple" d="1205,738 1190,870 1130,950 1085,1030 1075,1150 1050,1250 1000,1400" dash="16 6 4 6" a={2} /><Road k="purple" d="1085,1150 1130,1160 1260,1120 1300,1060 1350,1030 1440,1020 1548,960" dash="16 6 4 6" /><Road k="purple" d="1500,280 1430,370 1420,470 1360,600" dash="14 6" />
        <Road k="purple" d="1000,405 1120,430 1180,360 1230,320 1260,285 1480,280" dash="14 6" /><Road k="purple" d="1350,1120 1400,1160 1440,1140 1500,1190 1548,1210" dash="16 6 4 6" />
        <Reserve d="150,0 190,50 250,85 330,110 400,170 450,200 520,160 480,90 470,30 400,20 380,0" /><Reserve d="40,340 120,400 160,460 300,515 360,520 370,460 300,415 240,400 100,395" /><Reserve d="40,530 100,580 160,600 210,645 160,700 40,700" />
        <Reserve d="740,215 700,240 685,290 720,330 700,380 680,440 710,460 680,500 635,540 690,585 750,580 790,510 785,380 765,320 745,250" /><Reserve d="280,1090 350,1080 360,1030 490,1040 540,1075 490,1110 490,1160 460,1240 410,1260 390,1200 370,1160 340,1200 300,1220 280,1150 280,1090" /><Reserve d="300,1240 340,1290 320,1300" />
        <Border d="830,0 785,20 790,120 800,200 830,240 800,290 850,340 810,400 830,450 860,490 820,540 865,580 855,650 830,680 855,730 810,740 800,800 770,830 815,890 800,920 755,940 770,1010 760,1040 715,1080 735,1130 765,1170 720,1200 700,1280 670,1320 660,1370 690,1420 670,1470" w={6.500} />
        <Road k="orange" d="40,110 80,140 65,190 100,230 70,290 40,300" /><Road k="orange" d="630,0 640,40 625,170 580,200 570,280 545,330 570,400 530,430 510,475 420,500 375,510 370,545 395,590 400,680" /><Road k="orange" d="40,440 100,450 150,500 220,540 300,570 310,600 350,640 400,670" />
        <Road k="orange" d="410,720 320,745 330,800 260,870 250,1020 285,1080 240,1110 190,1080 140,1110 130,1150 150,1200 180,1245 290,1250 300,1290 370,1295 440,1320" /><Road k="orange" d="0,1100 20,1200 35,1300 10,1380 45,1440 0,1490" /><Road k="orange" d="130,1150 100,1210 40,1220" /><Road k="orange" d="1010,935 1090,920 1140,950 1200,965 1260,990 1290,1045 1340,1025 1360,1060 1370,1150 1400,1220 1450,1250 1520,1260 1548,1290" a={5} />
        <Road k="red" d="615,0 690,30 725,75 735,160 755,210 755,300 785,380 790,510 775,580 775,670 750,760 700,860 640,950 625,1000 575,1060 575,1190 550,1220 455,1300 385,1420 405,1500" />
        <Road k="red" d="395,680 425,720 425,770 470,820 510,840 550,880 555,905 620,975" /><Road k="red" d="895,0 895,45 930,95 905,120 905,220 940,320 960,390 1000,490 1045,580 1050,720 1035,860 1000,960 965,1040 955,1160 930,1250 910,1400" a={2} />
        <Road k="red" d="1000,485 1060,515 1070,495 1035,465 1040,430 1070,420 1130,445 1210,430 1240,385 1250,325 1310,280 1370,290 1400,310 1405,290 1470,290 1500,270" />
      </g>
      {/* sea, coast and centre */}
      <path d="M0,0V1245H543L545,1225L560,1150L570,1080L578,1030L690,20V0Z" fill="#6b7f87" />
      <rect x="697" y="0" width="603" height="14" fill="#8a8f78" />
      {scatter(46, 71, 705, 0, 580, 12).map((b, i) => <path key={i} d={blob(b, 3)} fill={i % 3 ? '#75876a' : '#8d8d8a'} />)}
      <path d={line('143,880 131,950 111,1000 98,1040 82,1110 75,1150 66,1185 50,1205 32,1225 20,1250')} fill="none" stroke="#655a72" strokeWidth="5" />
      <path d={line('328,0 328,14')} stroke="#655a72" strokeWidth="6" />
      <path d="M700,0v14" stroke="#844050" strokeWidth="4" />
      <path d="M727,0v14M921,0l4,14M926,8q10,-8 18,2M1070,0l-40,14" stroke="#98583f" strokeWidth="5" fill="none" />
      <path d="M782,0l-6,14M862,0l8,14M1190,0l20,14M1242,0l-12,14" stroke="#a0824e" strokeWidth="4" fill="none" />
      <g transform="translate(-20 993) scale(0.8418 0.3333)">
        <Area c="#878786" d="560,190 860,190 850,520 830,640 780,756 480,756 500,620 510,470 530,300 545,200" a={3} />
        {scatter(60, 81, 600, 200, 240, 540).map((b, i) => <path key={i} d={blob({ ...b, r: b.r * 1.6 }, 0.8)} fill={i % 2 ? '#8f917e' : '#7d8d6c'} />)}
        {scatter(50, 91, 860, 200, 700, 550).map((b, i) => <path key={i} d={blob({ ...b, r: b.r * 1.6 }, 0.6)} fill={i % 3 ? '#7f8c70' : '#87878a'} />)}
        <Area c="#7b8262" d="870,600 950,560 960,740 900,756 850,640" st="#5b7a50" /><Area c="#7f8c70" d="870,500 940,520 930,560 880,570" /><Area c="#6f8a68" d="1040,240 1090,220 1130,270 1060,270" />
        {scatter(56, 95, 520, 200, 300, 540).map((b, i) => <path key={i} d={`M${b.x},${b.y}l${20 + b.q * 50},${b.r * 5 - 30}l${b.r * 2 - 10},${40 + b.q * 60}`} fill="none" stroke="#76767a" strokeWidth="1.2" vectorEffect="non-scaling-stroke" />)}
        <Road k="black" d="620,195 640,230 690,250 760,200 830,210 835,235" /><Road k="black" d="835,490 840,600 820,660 800,756" a={2} />
        <Road k="black" d="945,500 950,600 945,756" a={2} />
        <Road k="gray" d="1000,300 1100,340 1180,370 1240,390 1290,370 1340,400 1380,470 1420,500" a={6} /><Road k="gray" d="1290,370 1230,440 1170,510 1180,560 1240,620" a={6} /><Road k="gray" d="1000,520 1100,560 1160,620 1260,640 1320,700" a={7} /><Road k="gray" d="1130,440 1200,400 1250,360 1310,330" a={6} /><Road k="gray" d="990,420 1080,400 1200,300 1290,260" a={6} /><Road k="gray" d="1450,300 1480,420 1460,560 1568,640" a={6} />
        <Road k="purple" d="1000,250 1030,240 1020,300 1060,320 1080,300 1150,350 1200,400" a={6} /><Road k="purple" d="1010,330 1030,350 1020,400 1000,380 1010,330" a={3} /><Road k="purple" d="1085,470 1080,600 1110,650 1050,650 1060,700 1180,700 1230,680 1280,720 1360,670" a={8} /><Road k="purple" d="1360,380 1330,440 1340,510 1400,530 1480,550 1540,600 1568,590" a={6} /><Road k="purple" d="1270,240 1310,210 1340,240 1300,290 1260,300 1220,270" a={6} /><Road k="purple" d="1480,250 1500,230 1540,280 1568,240" a={6} /><Road k="purple" d="1240,440 1180,480 1200,540" dash="10 5" />
        <Road k="purple" d="970,600 990,590 985,640 965,650 970,600" a={3} /><Road k="purple" d="1530,650 1550,640 1560,700 1535,690 1530,650" a={3} /><Road k="purple" d="555,195 548,260 530,390 515,460 500,560 490,650 478,756" a={2} /><Road k="purple" d="715,400 718,600 700,690 690,756" a={3} />
        <Road k="maroon" d="830,195 835,240" /><Road k="maroon" d="675,430 700,415 740,405 775,425 820,420" a={2} /><Road k="maroon" d="570,550 600,600 650,680 700,756" a={2} /><Road k="maroon" d="530,570 535,756" a={1} /><Road k="maroon" d="530,570 560,590 575,540" a={1} />
        <Road k="orange" d="640,210 630,290 600,340" /><Road k="orange" d="690,290 740,300 790,250 830,240" /><Road k="orange" d="580,525 640,560 700,590 780,600 840,620" a={4} /><Road k="orange" d="870,600 920,570 960,560 1010,580 1020,440 1060,430 1090,370 1130,360 1120,290" /><Road k="orange" d="620,756 650,690 710,680 740,640 790,640" /><Road k="orange" d="1015,580 1010,680 1040,720 1090,710 1130,730 1200,720 1230,690 1300,720" /><Road k="orange" d="1380,600 1400,500" /><Road k="orange" d="1510,195 1530,300 1568,300" />
        <Road k="red" d="590,195 580,350 570,480 575,560 620,650 680,756" a={4} /><Road k="red" d="770,195 775,330 785,480 780,600 785,680 775,756" a={3} /><Road k="red" d="680,195 685,330 670,480 650,600 640,756" a={3} /><Road k="red" d="850,520 870,600 890,680 885,756" a={3} />
        <Road k="red" d="930,225 970,215 1030,245 1070,280 1120,295 1150,260 1180,205 1230,205" a={2} /><Road k="red" d="1390,195 1375,240 1405,290 1375,400 1380,440 1420,440 1445,520 1410,620 1400,756" a={2} /><Road k="red" d="820,680 790,756" />
      </g>
    </g>
    <Label x={1144} y={1501} w={140} size={26} c="#5f4a72">מחוז תל אביב</Label>
    <Label x={1314} y={1517} w={68} size={25} c="#5f4a72">המרכז</Label>
    <Label x={1214} y={1547} w={55} size={21}>רמת גן</Label>
    <Label x={1120} y={1587} w={27} size={25}>יפו</Label>
    <Label x={1152} y={1634} w={51} size={27}>חולון</Label>
    <Label x={1291} y={1608} w={94} size={21}>יהוד מונוסון</Label>
    <Label x={1405} y={1577} w={44}>אלעד</Label>
    <Label x={1520} y={1474} w={56}>אלקנה</Label>
    <Label x={1742} y={1481} w={50}>אריאל</Label>
    <Label x={1895} y={1488} w={41}>قبلان</Label>
    <Label x={1733} y={1518} w={58}>سلفيت</Label>
    <Label x={1580} y={1550} w={77}>كفر الديك</Label>
    <Label x={1858} y={1610} w={48}>سنجل</Label>
    <Label x={1752} y={1645} w={42}>روابي</Label>
    <Label x={2187} y={810} w={66}>בית שאן</Label>
    <Label x={2441} y={804} w={103}>دير أبي سعيد</Label>
    <Label x={2304} y={851} w={95} size={24} c="#66547a">لواء الأغوار</Label>
    <Label x={2312} y={880} w={79} size={24} c="#66547a">الشمالية</Label>
    <Label x={2078} y={1018} w={65} size={19} c="#2c6a34">נחל בזק</Label>
    <Label x={2095} y={1040} w={31} size={19} c="#2c6a34">עילי</Label>
    <Label x={2574} y={506} w={30}>لكا</Label>
    <Label x={2033} y={1178} w={47}>طمّون</Label>
    <Label x={2476} y={1125} w={67} size={25} c="#66547a">عجلون</Label>
    <Label x={2566} y={1094} w={36}>لون</Label>
    <Label x={2574} y={1136} w={30}>جرة</Label>
    <Label x={2008} y={1231} w={51} c="#66547a">منطقة</Label>
    <Label x={2004} y={1063} w={22}>عـ</Label>
    <Label x={2000} y={1360} w={28}>بيتا</Label>
    <Label x={2293} y={1480} w={98} size={23} c="#66547a">لواء دير علا</Label>
    <Label x={2031} y={1544} w={106}>מעלה אפרים</Label>
    <Label x={2523} y={1600} w={64} size={27}>السلط</Label>
  </svg>
);

/* IMG brand mark: serif letters with a striped centre */
const ImgLogo = ({ w }: { w: number }) => (
  <svg width={w} height={w * 0.37} viewBox="0 0 243 90">
    <g fill="#1b4573" fontFamily="'Liberation Serif', serif">
      <text x="-5" y="87" fontSize="130" textLength="38" lengthAdjust="spacingAndGlyphs">I</text>
      <text x="155" y="87" fontSize="128" textLength="92" lengthAdjust="spacingAndGlyphs">G</text>
      <path d="M59,30L65,40L60,83L69,86V88H44V86L52,83Z" />
      <path d="M56,0L103,72L95,89L62,30Z" />
      <path d="M76,0L113,53L106,68L82,22Z" />
      <path d="M97,0L123,33L117,47L102,16Z" />
      <path d="M125,18L132,1L135,4L143,83L155,86V88H125V86L132,83Z" />
    </g>
  </svg>
);

/* ---------- small icons ---------- */
const St = ({ w = 32, h = 32, sw = 2.4, c = '#5b5b66', children, vb }: { w?: number; h?: number; sw?: number; c?: string; children: React.ReactNode; vb?: string }) => (
  <svg width={w} height={h} viewBox={vb ?? '0 0 32 32'} fill="none" stroke={c} strokeWidth={sw} strokeLinecap="round" strokeLinejoin="round">{children}</svg>
);
const GMark = ({ s, bg, fg }: { s: number; bg: string; fg: string }) => (
  <svg width={s} height={s} viewBox="0 0 32 32">
    <circle cx="16" cy="16" r="16" fill={bg} />
    <path d="M22.5 10.5A8.5 8.5 0 1 0 24.5 17H17.5M24.5 17V22" fill="none" stroke={fg} strokeWidth="2.4" strokeLinecap="round" />
  </svg>
);
const Badge = ({ bg, t, hex, shield }: { bg: string; t: string; hex?: boolean; shield?: boolean }) => (
  <svg width="32" height="32" viewBox="0 0 32 32">
    {hex ? <path d="M9.5 0H22.5L32 9.5V22.5L22.5 32H9.5L0 22.5V9.5Z" fill={bg} />
      : shield ? <path d="M16 0Q22 4 30 4.5Q32 24 16 32Q0 24 2 4.5Q10 4 16 0Z" fill={bg} />
        : <circle cx="16" cy="16" r="16" fill={bg} />}
    <text x="16" y={t.length === 1 ? 23 : 21} textAnchor="middle" fontFamily={UI} fontWeight="800" fontSize={t.length === 1 ? 20 : 14} textLength={t.length === 3 ? 30 : undefined} lengthAdjust="spacingAndGlyphs" fill="#fff">{t}</text>
  </svg>
);
const FolderIcon = () => <St w={31} h={28} vb="0 0 31 28"><path d="M2 24V4q0-3 3-3h6q2 0 3 2l2 2h10q3 0 3 3v16q0 2-3 2H5q-3 0-3-2Z" /></St>;

/* ---------- dock icons ---------- */
const Tile = ({ fill }: { fill: string }) => <rect x="14" y="19" width="78" height="79" rx="18" fill={fill} />;
const Bars = ({ x, y, h, w = 13, g = 20, c = '#d6332c' }: { x: number; y: number; h: number; w?: number; g?: number; c?: string }) => (
  <g fill={c}><rect x={x} y={y} width={w} height={h} rx={w / 2} /><rect x={x + g} y={y} width={w} height={h} rx={w / 2} /></g>
);

const dock: { dot?: boolean; art: React.ReactNode }[] = [
  { dot: true, art: <><Tile fill="#e4e9f0" /><path d="M56 19H32Q14 19 14 37V80Q14 98 32 98H62Q58 84 59 65H48Q49 38 56 19Z" fill="url(#finder)" /><path d="M34 42v7M71 42v7" stroke="#1e2a3c" strokeWidth="4" strokeLinecap="round" /><path d="M30 73Q53 92 77 73" fill="none" stroke="#16202e" strokeWidth="3.4" strokeLinecap="round" /><path d="M56 19Q49 38 48 65H59Q58 84 62 98" fill="none" stroke="#1e2a3c" strokeWidth="1.6" opacity=".4" /></> },
  { art: <><Tile fill="#f0eff1" />{['#78d959', '#f5bb41', '#ee9338', '#d8402f', '#9aa3a8', '#ec5a6b', '#9a51dd', '#3b8ff3', '#5fd0a5'].map((c, i) => <rect key={i} x={26.5 + (i % 3) * 19.3} y={33 + Math.floor(i / 3) * 19} width="14.6" height="14.6" rx="3.5" fill={c} />)}</> },
  { dot: true, art: <><circle cx="53" cy="60" r="42" fill="url(#fox)" /><path d="M66 14Q64 30 78 40Q96 50 95 66Q88 92 62 94Q84 84 82 62Q76 44 62 40Q58 24 66 14Z" fill="#ffd93f" /><circle cx="52" cy="58" r="19" fill="url(#foxball)" /><path d="M20 34Q22 28 24 27L32 36L38 28Q40 36 44 40Q54 40 58 47Q50 46 46 54Q38 60 34 70Q30 82 44 90Q12 84 11 58Q12 44 20 34Z" fill="#fb7d35" /></> },
  { art: <><Tile fill="url(#discord)" /><FaDiscord x="24" y="29" size={58} color="#fff" /></> },
  { dot: true, art: <><circle cx="53" cy="59" r="34" fill="#0e1510" /><FaSpotify x="12" y="18" size={82} color="#64d36e" /></> },
  { dot: true, art: <><Tile fill="#fff" /><path d="M66 30L80 37V82L66 89L42 66L30 76L24 72V47L30 43L42 53Z M66 47L51 59.500L66 72Z" fill="#2f7fc9" fillRule="evenodd" /><path d="M66 30L80 37V82L66 89Z" fill="#3d95e2" /><path d="M24 47L30 43L66 72V89Z" fill="#27649f" /></> },
  { art: <><path d="M53 12Q56 12 60 16L88 32Q94 36 94 42V76Q94 83 88 86L60 102Q53 108 46 102L18 86Q12 82 12 76V42Q12 36 18 32L46 16Q50 12 53 12Z" fill="#8e50c8" /><path d="M53 18L86 36Q90 38 90 43V76Q90 80 86 83L53 101L20 83Q16 80 16 76V43Q16 38 20 36Z" fill="#fff" /><path d="M66 28L82 36V81L66 90L42 66L30 76L23 72V46L30 43L42 53Z M66 46L51 59.500L66 74Z" fill="#7b44b8" fillRule="evenodd" /><path d="M68 29L82 36V81L68 88Z" fill="#a877e0" /><path d="M23 46L30 43L66 74V90Z" fill="#54278f" opacity=".8" /></> },
  { art: <><rect x="14" y="21" width="76" height="76" fill="url(#pc)" /><rect x="25" y="31" width="55" height="55" fill="#060606" /><text x="30" y="58" fontFamily={UI} fontWeight="800" fontSize="27" fill="#fff" textLength="40" lengthAdjust="spacingAndGlyphs">PC</text><rect x="31" y="76" width="21" height="4" fill="#fff" /></> },
  { art: <><Tile fill="#ed7546" /><circle cx="74" cy="40" r="6.500" fill="#fff" /><path d="M66 44L46 62L38 80L54 66L70 50Z" fill="#fff" /><path d="M44 74L29 83L36 84Z" fill="none" stroke="#fff" strokeWidth="2.600" /><path d="M48 62L54 66M57 52L62 58" stroke="#ed7546" strokeWidth="2" /></> },
  { art: <><Tile fill="url(#wa)" /><FaWhatsapp x="19" y="24" size={68} color="#fff" /></> },
  { art: <><Tile fill="url(#trello)" /><rect x="27" y="33" width="52" height="52" rx="8" fill="#fff" /><rect x="36" y="43" width="14" height="30" rx="2.500" fill="#2f74bd" /><rect x="56" y="43" width="14" height="18" rx="2.500" fill="#2f74bd" /></> },
  { art: <><rect x="15" y="21" width="76" height="76" fill="#e08c33" /><path d="M60 30L91 60V97H40L26 82L48 50Z" fill="#cf6f2a" /><path d="M53 46L36 66M53 46L70 66" stroke="#fff" strokeWidth="4" /><rect x="42" y="30" width="22" height="18" rx="3" fill="#fff" /><rect x="25" y="64" width="21" height="18" rx="3" fill="#fff" /><rect x="60" y="64" width="21" height="18" rx="3" fill="#fff" /></> },
  { art: <><rect x="6" y="11" width="95" height="95" rx="8" fill="url(#preview)" /><rect x="16" y="30" width="78" height="60" fill="#d8dde2" transform="rotate(4 55 60)" /><g transform="rotate(-4 55 60)"><rect x="15" y="31" width="78" height="60" fill="#fff" /><rect x="19" y="35" width="70" height="52" fill="#3a5f9a" /><path d="M30 40L60 36M40 46L80 38" stroke="#b8c8dc" strokeWidth="4" /><path d="M19 64L34 50L48 62L62 52L89 70V87H19Z" fill="#52667a" /><path d="M19 78L89 70V87H19Z" fill="#1f2932" /></g><path d="M96 26L62 78L58 90L68 84L101 36Z" fill="#f0a03f" stroke="#6b4020" strokeWidth="1.500" /><path d="M62 78L50 102Q62 102 68 84Z" fill="#8a5a35" /><rect x="45" y="24" width="16" height="8" rx="3" fill="#4a5058" /><circle cx="53" cy="22" r="4" fill="none" stroke="#4a5058" strokeWidth="2.500" /></> },
  { dot: true, art: <><Tile fill="url(#db)" />{[66, 50, 34].map((y) => <g key={y}><path d={`M25 ${y}v12q28 16 56 0v-12Z`} fill="#eceaea" /><ellipse cx="53" cy={y} rx="28" ry="9" fill={y === 34 ? '#fff' : '#8e2a26'} /></g>)}<path d="M53 33l-8 5q0 4 6 2l-2 4h8l-2-4q6 2 6-2Z" transform="translate(0 -5)" fill="#111" /></> },
  { art: <><rect x="4" y="10" width="98" height="98" fill="#6ef0f2" /><rect x="9" y="15" width="88" height="88" fill="#0c1216" /><path d="M53 22L88 58H66V82L53 95L16 58ZM53 42L35 58L53 76V58H70Z" fill="#fff" fillRule="evenodd" /></> },
  { art: <><rect x="10" y="14" width="87" height="86" fill="#f3f3f3" /><FaUnity x="26" y="33" size={48} color="#111" /></> },
  { art: <><circle cx="53" cy="59" r="43" fill="#050505" /><path d="M39 34H49V84L39 85Z" fill="#a31d1f" /><path d="M57 34H67V85L57 84Z" fill="#a31d1f" /><path d="M39 34H49L67 85L57 84Z" fill="#de2c2b" /></> },
  { art: <><Tile fill="#fcfcfc" /><circle cx="53" cy="59" r="34" fill="#232129" /><path d="M39 45V73H67V45L39 73M39 45L67 73" fill="none" stroke="#fff" strokeWidth="3.600" /></> },
  { art: <><path d="M14 10H90V16H96V94H90V102H14V94H8V16H14Z" fill="#776c74" /><path d="M19 16H86V22H91V78H14V22H19Z" fill="#fff" /><path d="M14 78H91V90H86V96H19V90H14Z" fill="#8f9dab" /><path d="M36 34v25M66 34v25" stroke="#776c74" strokeWidth="6" /></> },
  { dot: true, art: <><rect x="16" y="20" width="74" height="76" rx="17" fill="#dfe5e8" /><rect x="17" y="22" width="72" height="73" rx="16" fill="#050505" /><rect x="23" y="28" width="60" height="61" rx="9" fill="#2a2a2c" /><path d="M29 35l7 5l-7 5M40 49h11" fill="none" stroke="#fff" strokeWidth="3.200" /></> },
  { dot: true, art: <><rect x="9" y="16" width="88" height="72" rx="5" fill="#1c2026" /><rect x="13" y="20" width="80" height="56" fill="url(#imac)" /><rect x="9" y="77" width="88" height="11" fill="#d9dadd" /><path d="M42 88h22l4 14H38Z" fill="#b9bbc0" /><path d="M38 44l12-2v14h-12zM52 41l14-2v17H52zM38 58h12v12l-12-2zM52 58h14v15l-14-2z" fill="#8fdcfb" /><Bars x={60} y={12} h={94} /></> },
  { dot: true, art: <><path d="M11 30L45 23V57H11ZM48 22L93 14V57H48ZM11 60H45V95L11 88ZM48 60H93V104L48 96Z" fill="url(#win)" /><Bars x={77} y={61} h={44} w={9} g={14} c="#e0523a" /></> },
  { dot: true, art: <><rect x="4" y="10" width="98" height="98" fill="#3377cf" /><ellipse cx="65" cy="47" rx="27" ry="27" fill="none" stroke="#fff" strokeWidth="4.500" /><path d="M46 67L15 97" stroke="#fff" strokeWidth="5.500" strokeLinecap="round" /><Bars x={75} y={61} h={44} w={10} g={14} c="#dd5240" /></> },
];

const Dot = () => <circle cx="53" cy="120" r="3.800" fill="#68666a" />;

const Gradients = () => (
  <svg width="0" height="0">
    <defs>
      {([['finder', '#55c6f8', '#3a6df0'], ['discord', '#7580f2', '#5560e8'], ['wa', '#8fee82', '#57c63c'], ['trello', '#3f93e6', '#3277be'], ['db', '#a3332d', '#5c1a19'], ['preview', '#6fb5e6', '#3579c4'], ['imac', '#3fa3ea', '#2a6fd0'], ['win', '#54b0f5', '#2565e0'], ['fox', '#fda63a', '#e3256f'], ['foxball', '#a84ade', '#4b4aa8'], ['pc', '#35e23e', '#f3f23b'], ['fold', '#8dcdf5', '#76bdee']] as const).map(([id, a, b]) => (
        <linearGradient key={id} id={id} x1="0" y1="0" x2={id === 'pc' ? '1' : '0'} y2="1"><stop offset="0" stopColor={a} /><stop offset="1" stopColor={b} /></linearGradient>
      ))}
    </defs>
  </svg>
);

const W = '#eef1f6';

export default function App() {
  return (
    <Desktop>
      <Global />
      <Gradients />
      <Wallpaper />
      <DesktopCorner />
      <MenuBar>
        <MenuItem $w={73}><FaApple size={31} /></MenuItem>
        <MenuItem $w={130} $bold $ls={-0.6}>Firefox</MenuItem>
        <MenuItem $w={84}>File</MenuItem>
        <MenuItem $w={88}>Edit</MenuItem>
        <MenuItem $w={100}>View</MenuItem>
        <MenuItem $w={128} $ls={-0.3}>History</MenuItem>
        <MenuItem $w={177} $ls={-0.1}>Bookmarks</MenuItem>
        <MenuItem $w={105}>Tools</MenuItem>
        <MenuItem $w={138} $ls={-0.1}>Window</MenuItem>
        <MenuItem $w={721}>Help</MenuItem>
        <MenuItem $w={68}><svg width="17" height="32" viewBox="0 0 17 32"><rect width="6" height="32" rx="3" fill="#ea4e2b" /><rect x="11" width="6" height="32" rx="3" fill="#ea4e2b" /></svg></MenuItem>
        <MenuItem $w={74}><St c={W}><rect x="1.500" y="1.500" width="29" height="29" rx="8" /><circle cx="11" cy="10.500" r="3.500" fill={W} /></St></MenuItem>
        <MenuItem $w={76}><St c={W} w={34} sw={3.500}><path d="M17 2A14 14 0 1 1 2 17M17 2v8M14 18l-5-1" /></St></MenuItem>
        <MenuItem $w={72}><svg width="30" height="28" viewBox="0 0 30 28" fill={W}><rect width="13" height="28" rx="3" /><rect x="17" width="13" height="12" rx="3" /><rect x="17" y="16" width="13" height="12" rx="3" /></svg></MenuItem>
        <MenuItem $w={67}><St c={W} w={27} h={27} sw={3}><circle cx="16" cy="16" r="14" /><path d="M12 10v12l9-6z" fill={W} /></St></MenuItem>
        <MenuItem $w={70}><svg width="32" height="32"><rect width="32" height="32" rx="5" fill={W} /><text x="16" y="24.500" textAnchor="middle" fontSize="23" fill="#3c74ad">A</text></svg></MenuItem>
        <MenuItem $w={57} $ls={-0.4} $size={21.5}>56%</MenuItem>
        <MenuItem $w={88}><svg width="51" height="24" viewBox="0 0 51 24"><rect x="1" y="1" width="44" height="22" rx="6" fill="none" stroke="#a9bfdb" strokeWidth="2" /><rect x="4" y="4" width="22" height="16" rx="3" fill={W} /><path d="M47.500 8q4 4 0 8z" fill="#a9bfdb" /></svg></MenuItem>
        <MenuItem $w={71}><svg width="34" height="24" viewBox="0 0 34 24" fill="none" stroke={W} strokeWidth="4.500"><path d="M2 9Q17-4 32 9M8 15.500Q17 8 26 15.500" /><path d="M17 24l-5-5q5-4 10 0Z" fill={W} stroke="none" /></svg></MenuItem>
        <MenuItem $w={64}><St c={W} w={26} h={26} sw={3.500}><circle cx="13" cy="13" r="11" /><path d="M21 21l9 9" /></St></MenuItem>
        <MenuItem $w={61}><svg width="29" height="27" viewBox="0 0 29 27"><rect x="1.500" y="1.500" width="26" height="10" rx="5" fill="none" stroke={W} strokeWidth="2.500" /><circle cx="7" cy="6.500" r="4" fill={W} /><rect y="15" width="29" height="12" rx="6" fill={W} /><circle cx="22" cy="21" r="3.500" fill="#3f73ac" /></svg></MenuItem>
        <MenuItem $w={62}><svg width="28" height="28" viewBox="0 0 28 28"><circle cx="14" cy="14" r="14" fill="#2c2140" /><path d="M3 8Q14-2 24 7L14 15Z" fill="#a8458c" /><path d="M4 20L14 14L25 20Q14 32 4 20Z" fill="#3b6fa0" /><path d="M7 10l14 8M9 20l10-11" stroke="#dff" strokeWidth="1.600" /><circle cx="14" cy="14" r="2.500" fill="#fff" /></svg></MenuItem>
        <MenuItem $w={157} $size={25.8} $ls={0.6}>Thu 11 Nov</MenuItem>
        <MenuItem $w={80} $size={25.8} $ls={0.9}>11:50</MenuItem>
      </MenuBar>

      <WindowShadow />
      <Window>
        <TabStrip>
          <Lights><Light $c="#ec6a5e" /><Light $c="#f4be4f" /><Light $c="#61c454" /></Lights>
          <Tab>
            <Favicon><FaReact size={27} /></Favicon>
            <TabTitle>React App</TabTitle>
            <St w={16} h={16} vb="0 0 16 16" sw={2} c="#222"><path d="M1 1l14 14M15 1L1 15" /></St>
          </Tab>
          <St w={24} h={24} vb="0 0 24 24" sw={2.200}><path d="M12 0v24M0 12h24" /></St>
        </TabStrip>
        <Toolbar>
          <NavIcons>
            <St sw={2.800}><path d="M29 16H3M14 5L3 16l11 11" /></St>
            <St sw={2.800} c="#bdbdc2"><path d="M3 16h26M18 5l11 11-11 11" /></St>
            <St sw={2.800}><path d="M27 9A13 13 0 1 0 29 19M29 3v9h-9" /></St>
          </NavIcons>
          <UrlBar>
            <UrlIcons>
              <UrlIcon $w={57}><St><path d="M16 1Q22 5 29 6Q31 22 16 31Q1 22 3 6Q10 5 16 1Z" /></St></UrlIcon>
              <UrlIcon $w={56}><St><path d="M6 2h12l8 8v18q0 2-2 2H6q-2 0-2-2V4q0-2 2-2ZM17 2v9h9" /></St></UrlIcon>
              <UrlIcon $w={40}><St w={30} h={26} sw={3}><path d="M2 9h15M15 23h15" /><circle cx="24" cy="9" r="4.500" /><circle cx="8" cy="23" r="4.500" /></St></UrlIcon>
              <UrlIcon $w={51}><St><path d="M16 31Q3 19 3 13a13 12 0 0 1 26 0Q29 19 16 31Z" /><circle cx="16" cy="13" r="5" /></St></UrlIcon>
            </UrlIcons>
            <UrlText><b>localhost</b>:3000/MainPage</UrlText>
            <St w={34} h={34}><path d="M16 2l4.300 9.200 10 1.300-7.400 7 1.900 10L16 24.600 7.200 29.500l1.900-10-7.400-7 10-1.300Z" /></St>
          </UrlBar>
          <Extensions>
            <St><path d="M5 4h22q2 0 2 2v9a13 13 0 0 1-26 0V6q0-2 2-2ZM10 13l6 6 6-6" /></St>
            <St c="#2a62d6" sw={2.600}><path d="M16 1v22M7 14l9 9 9-9M2 24v4q0 3 3 3h22q3 0 3-3v-4" /></St>
            <Badge bg="#55545f" t="S" />
            <Badge bg="#7b7b7b" t="uo" shield />
            <Badge bg="#dd3549" t="ABP" hex />
            <GMark s={32} bg="#55bf97" fg="#fff" />
            <St w={28} h={28} sw={2.800}><path d="M3 7h26M3 16h26M3 25h26" /></St>
          </Extensions>
        </Toolbar>
        <Bookmarks>
          <Bookmark $w={153} $gap={8} $ls={-0.55}><FaYoutube size={32} color="#e8352a" />YouTube</Bookmark>
          <Bookmark $w={294} $gap={10} $ls={-0.4}><svg width="32" height="32"><rect width="32" height="32" fill="#2a2526" /><rect x="9" width="14" height="10" fill="#b9b9bb" /><rect x="17" y="2" width="4" height="7" fill="#555" /><rect x="6" y="15" width="20" height="15" fill="#eee" /><rect x="6" y="18" width="20" height="9" fill="#a92a2c" /></svg>Free games Game B...</Bookmark>
          <Bookmark $w={294} $gap={10} $ls={-0.4}><svg width="32" height="32"><circle cx="16" cy="16" r="16" fill="#9a3fe8" /><path d="M10 13v6q0 6 6 6t6-6v-6M10 9l6-4 6 4" fill="none" stroke="#fff" strokeWidth="4" /></svg>Online Courses - An...</Bookmark>
          <Bookmark $w={177} $gap={7} $ls={-0.3}><svg width="32" height="28"><path d="M3 2h26M1 10h26M5 18h26M3 26h26" stroke="#49aef8" strokeWidth="4.500" strokeLinecap="round" /></svg>StackSkills</Bookmark>
          <Bookmark $w={215} $gap={8} $ls={-0.4}><svg width="32" height="32"><rect width="32" height="32" rx="4" fill="#3a82d0" /><rect x="5" y="5" width="9" height="21" rx="2" fill="#fff" /><rect x="18" y="5" width="9" height="14" rx="2" fill="#fff" /></svg>Boards | Trello</Bookmark>
          <Bookmark $w={297} $gap={10} $ls={-0.3}><svg width="30" height="22" viewBox="0 0 30 22"><path d="M0 3v19h7V8Z" fill="#4a86f0" /><path d="M30 3v19h-7V8Z" fill="#41a852" /><path d="M0 3Q3-2 7 2l8 6 8-6Q27-2 30 3L15 16Z" fill="#e0443a" /><path d="M23 2Q27-2 30 3v3l-7 5Z" fill="#f3bb2c" /></svg>...(1,251) - sc דואר נכנס</Bookmark>
          <Bookmark $w={291} $gap={12} $ls={-0.25}><svg width="24" height="32"><path d="M5 6L20 0V22L5 32Z" fill="#f0c050" /><path d="M0 12L8 6V26L0 32Z" fill="#2f5d96" /><path d="M8 12L15 8V20L8 25Z" fill="#fff" /></svg>Cloudcraft – Draw A...</Bookmark>
          <Bookmark $w={172} $gap={7} $ls={-0.4}><FolderIcon />Game Dev</Bookmark>
          <Bookmark $w={120} $gap={7} $ls={-0.5}><FolderIcon />Work</Bookmark>
        </Bookmarks>

        <Page>
          <Feed>
            <Notice>
              <div>
                <NoticeWho><Avatar $s={61}>DO</Avatar><NameTag>Dor</NameTag></NoticeWho>
                <NoticeText>Liked your picture</NoticeText>
              </div>
              <NoticeSide>
                <TimeTag>1 minutes ago</TimeTag>
                <RoundButton><FaTrashAlt size={29} /></RoundButton>
              </NoticeSide>
            </Notice>
          </Feed>
          <Center>
            <TopBar><SettingsButton><FaCog size={26} /></SettingsButton></TopBar>
            <MapArea>
              <MapPicture />
              <Marker><ImgLogo w={92} /></Marker>
              <Popup>
                <LogoCell><ImgLogo w={243} /></LogoCell>
                <VLine />
                <Details>
                  <TitleRow>
                    <Title>Img3</Title>
                    <Ago>NaN days ago</Ago>
                    <DottedRing><FaGlobe size={29} /></DottedRing>
                  </TitleRow>
                  <Caption>Example</Caption>
                </Details>
                <AuthorCol>
                  <Rule />
                  <Author><Avatar $s={61} $dim>DO</Avatar>dor</Author>
                  <LikeButton>
                    <LikeMain><FaHeart size={30} />Like</LikeMain>
                    <LikeCount>1</LikeCount>
                  </LikeButton>
                  <OrGroup>
                    <OrHalf $c="#8c6e24"><FaEdit size={31} /></OrHalf>
                    <OrHalf $c="#582172" $right><FaTimes size={30} /></OrHalf>
                    <OrBadge>or</OrBadge>
                  </OrGroup>
                </AuthorCol>
                <VLine />
                <CommentCol>
                  <SectionTitle>Comments</SectionTitle>
                  <CommentBox>
                    <Avatar $s={76} $dim>DO</Avatar>
                    <CommentText><div><b>dor</b><time>1 minutes ago</time></div><div>a <em>@nati</em></div></CommentText>
                  </CommentBox>
                  <ReplyInput />
                  <ReplyArea><GMark s={47} bg="#30755c" fg="#a6b3ad" /></ReplyArea>
                  <AddReply><AddIcon><FaEdit size={32} /></AddIcon><AddLabel>Add Reply</AddLabel></AddReply>
                </CommentCol>
                <CloseX>×</CloseX>
                <PopupTip />
              </Popup>
              <Attribution><a>Leaflet</a> | © <a>OpenStreetMap</a></Attribution>
            </MapArea>
            <BottomBar />
          </Center>
          <Side>
            <SideItem><FaPaste size={50} />New post</SideItem>
            <SideItem><FaFilter size={50} />Open filter</SideItem>
            <SideItem $on><FaMap size={50} />Switch feed view</SideItem>
            <SideItem><FaUser size={50} />See profile</SideItem>
          </Side>
        </Page>
      </Window>

      <Dock>
        {dock.map((d, i) => (
          <DockSlot key={i}>
            <svg width="106" height="128" viewBox="0 0 106 128">{d.art}{d.dot && <Dot />}</svg>
          </DockSlot>
        ))}
        <DockLine />
        <DockSlot>
          <svg width="106" height="128" viewBox="0 0 106 128">
            <path d="M12 96V30Q12 18 22 18H34L40 24H76Q86 24 86 32V96Z" fill="#5ba6dc" /><path d="M12 46V36Q12 30 22 30H34L40 34H82Q90 34 92 42" fill="none" stroke="#84c2ec" strokeWidth="2" /><path d="M12 46Q12 40 18 40H88Q94 40 94 46V92Q94 99 87 99H19Q12 99 12 92Z" fill="url(#fold)" />
          </svg>
        </DockSlot>
        <DockSlot>
          <svg width="106" height="128" viewBox="0 0 106 128">
            <path d="M20 24L30 14L40 22L52 12L64 20L76 15L86 26L80 36H26Z" fill="#8f9493" /><path d="M26 26l10-8 8 8 12-10 10 12 10-8 6 10z" fill="#e8e8e6" /><path d="M34 28l6 6 8-8M62 30l8 4M50 20l-4 8" stroke="#333" strokeWidth="4" fill="none" />
            <path d="M18 28Q53 42 88 28L78 92Q76 102 53 102Q30 102 28 92Z" fill="#f5f4f3" stroke="#d6d3d2" strokeWidth="2" /><path d="M34 44l6 44M56 50l-6 40M72 46l-6 44" stroke="#e2dfde" strokeWidth="4" fill="none" />
          </svg>
        </DockSlot>
      </Dock>
    </Desktop>
  );
}
